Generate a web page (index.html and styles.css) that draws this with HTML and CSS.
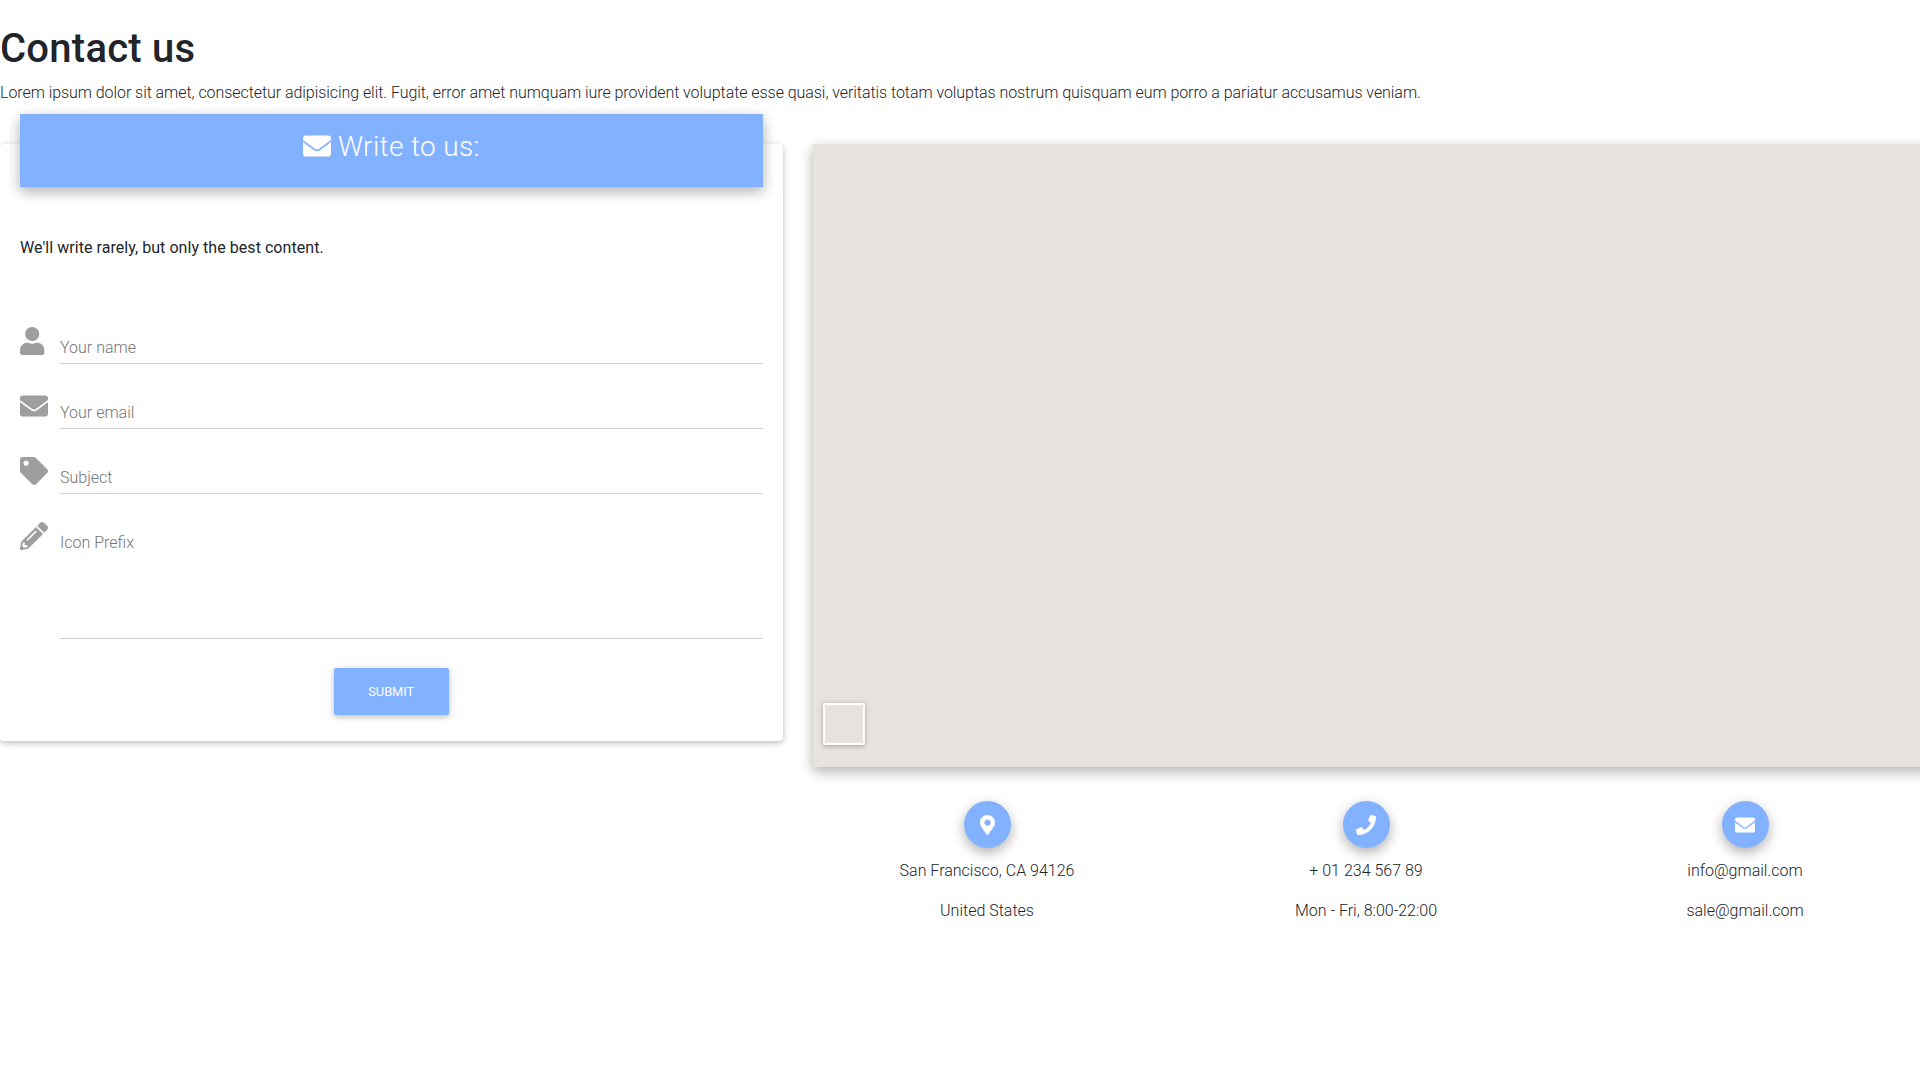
FILE: index.html
```html
<!DOCTYPE html>
<html lang="en">
<head>
    <meta charset="UTF-8">
    <meta name="viewport" content="width=device-width, initial-scale=1.0">
    <title>Contact us</title>
    <link rel="stylesheet" href="styles.css">
</head>
<body>
    <svg class="sprite" xmlns="http://www.w3.org/2000/svg">
        <symbol id="i-user" viewBox="0 0 448 512"><path d="M224 256c70.7 0 128-57.3 128-128S294.7 0 224 0 96 57.3 96 128s57.3 128 128 128zm89.6 32h-16.7c-22.2 10.2-46.9 16-72.9 16s-50.6-5.8-72.9-16h-16.7C60.2 288 0 348.2 0 422.4V464c0 26.5 21.5 48 48 48h352c26.5 0 48-21.5 48-48v-41.6c0-74.2-60.2-134.4-134.4-134.4z"/></symbol>
        <symbol id="i-envelope" viewBox="0 0 512 512"><path d="M502.3 190.8c3.9-3.1 9.7-.2 9.7 4.7V400c0 26.5-21.5 48-48 48H48c-26.5 0-48-21.5-48-48V195.6c0-5 5.7-7.8 9.7-4.7 22.4 17.4 52.1 39.5 154.1 113.6 21.1 15.4 56.7 47.8 92.2 47.6 35.7.3 72-32.8 92.3-47.6 102-74.1 131.6-96.3 154-113.7zM256 320c23.2.4 56.6-29.2 73.4-41.4 132.7-96.3 142.8-104.7 173.4-128.7 5.8-4.5 9.2-11.5 9.2-18.9v-19c0-26.5-21.5-48-48-48H48C21.5 64 0 85.5 0 112v19c0 7.4 3.4 14.3 9.2 18.9 30.6 23.9 40.7 32.4 173.4 128.7 16.8 12.2 50.2 41.8 73.4 41.4z"/></symbol>
        <symbol id="i-tag" viewBox="0 0 512 512"><path d="M0 252.118V48C0 21.49 21.49 0 48 0h204.118a48 48 0 0 1 33.941 14.059l211.882 211.882c18.745 18.745 18.745 49.137 0 67.882L293.823 497.941c-18.745 18.745-49.137 18.745-67.882 0L14.059 286.059A48 48 0 0 1 0 252.118zM112 64c-26.51 0-48 21.49-48 48s21.49 48 48 48 48-21.49 48-48-21.49-48-48-48z"/></symbol>
        <symbol id="i-pencil" viewBox="0 0 512 512"><path d="M497.9 142.1l-46.1 46.1c-4.7 4.7-12.3 4.7-17 0l-111-111c-4.7-4.7-4.7-12.3 0-17l46.1-46.1c18.7-18.7 49.1-18.7 67.9 0l60.1 60.1c18.8 18.7 18.8 49.1 0 67.9zM284.2 99.8L21.6 362.4.4 483.9c-2.9 16.4 11.4 30.6 27.8 27.8l121.5-21.3 262.6-262.6c4.7-4.7 4.7-12.3 0-17l-111-111c-4.8-4.7-12.4-4.7-17.1 0zM124.1 339.9c-5.5-5.5-5.5-14.3 0-19.8l154-154c5.5-5.5 14.3-5.5 19.8 0s5.5 14.3 0 19.8l-154 154c-5.5 5.5-14.3 5.5-19.8 0zM88 424h48v36.3l-64.5 11.3-31.1-31.1L51.7 376H88v48z"/></symbol>
        <symbol id="i-marker" viewBox="0 0 384 512"><path d="M172.268 501.67C26.97 291.031 0 269.413 0 192 0 85.961 85.961 0 192 0s192 85.961 192 192c0 77.413-26.97 99.031-172.268 309.67-9.535 13.774-29.93 13.773-39.464 0zM192 272c44.183 0 80-35.817 80-80s-35.817-80-80-80-80 35.817-80 80 35.817 80 80 80z"/></symbol>
        <symbol id="i-phone" viewBox="0 0 512 512"><path d="M493.4 24.6l-104-24c-11.3-2.6-22.9 3.3-27.5 13.9l-48 112c-4.2 9.8-1.4 21.3 6.9 28l60.6 49.6c-36 76.7-98.9 140.5-177.2 177.2l-49.6-60.6c-6.8-8.3-18.2-11.1-28-6.9l-112 48C3.9 366.5-2 378.1.6 389.4l24 104C27.1 504.2 36.7 512 48 512c256.1 0 464-207.5 464-464 0-11.2-7.7-20.9-18.6-23.4z"/></symbol>
    </svg>

    <h1>Contact us</h1>
    <p class="lead">Lorem ipsum dolor sit amet, consectetur adipisicing elit. Fugit, error amet numquam iure provident voluptate esse quasi, veritatis totam voluptas nostrum quisquam eum porro a pariatur accusamus veniam.</p>

    <div class="row">
        <!-- Left: form card -->
        <div class="col-form">
            <div class="card">
                <div class="card-header">
                    <h3><svg class="icon-inline"><use href="#i-envelope"/></svg> Write to us:</h3>
                </div>
                <p class="note">We'll write rarely, but only the best content.</p>

                <div class="field">
                    <svg class="prefix prefix-user"><use href="#i-user"/></svg>
                    <div class="input">Your name</div>
                </div>
                <div class="field">
                    <svg class="prefix"><use href="#i-envelope"/></svg>
                    <div class="input">Your email</div>
                </div>
                <div class="field">
                    <svg class="prefix"><use href="#i-tag"/></svg>
                    <div class="input">Subject</div>
                </div>
                <div class="field">
                    <svg class="prefix"><use href="#i-pencil"/></svg>
                    <div class="input input-area">Icon Prefix</div>
                </div>

                <div class="actions">
                    <button class="btn-submit">Submit</button>
                </div>
            </div>
        </div>

        <!-- Right: map and contact details -->
        <div class="col-map">
            <div class="map">
                <div class="map-control"></div>
            </div>
            <div class="contacts">
                <div class="contact">
                    <span class="circle"><svg class="circle-icon-marker"><use href="#i-marker"/></svg></span>
                    <p>San Francisco, CA 94126</p>
                    <p>United States</p>
                </div>
                <div class="contact">
                    <span class="circle"><svg class="circle-icon"><use href="#i-phone"/></svg></span>
                    <p>+ 01 234 567 89</p>
                    <p>Mon - Fri, 8:00-22:00</p>
                </div>
                <div class="contact">
                    <span class="circle"><svg class="circle-icon"><use href="#i-envelope"/></svg></span>
                    <p>info@gmail.com</p>
                    <p>sale@gmail.com</p>
                </div>
            </div>
        </div>
    </div>
</body>
</html>
```

FILE: styles.css
```css
:root {
    --blue: #82b1ff;
    --grey: #9e9e9e;
    --text: #212529;
    --shadow-1: 0 2px 5px rgba(0, 0, 0, 0.16), 0 2px 10px rgba(0, 0, 0, 0.12);
    --shadow-2: 0 5px 11px rgba(0, 0, 0, 0.18), 0 4px 15px rgba(0, 0, 0, 0.15);
}

* {
    margin: 0;
    padding: 0;
    box-sizing: border-box;
}

html, body {
    overflow-x: hidden;
}

body {
    font-family: Roboto, "Liberation Sans", sans-serif;
    font-size: 16px;
    font-weight: 300;
    line-height: 24px;
    color: var(--text);
    background: #fff;
    padding-top: 25px;
}

.sprite {
    display: none;
}

svg {
    fill: currentColor;
}

h1 {
    font-size: 40px;
    font-weight: 500;
    line-height: 48px;
    letter-spacing: 0.25px;
    margin-bottom: 8px;
}

.lead {
    letter-spacing: -0.06px;
    margin-bottom: 39px;
}

.row {
    display: flex;
    align-items: flex-start;
    width: 1935px;
}

.col-form {
    flex: 0 0 782.5px;
    margin-right: 30px;
}

.col-map {
    flex: 1;
}

/* Form card */
.card {
    display: flow-root;
    background: #fff;
    border-radius: 4px;
    box-shadow: var(--shadow-1);
    padding: 0 20px 26px;
}

.card-header {
    background: var(--blue);
    color: #fff;
    text-align: center;
    padding: 16px 16px 15px;
    margin-top: -30px;
    box-shadow: var(--shadow-2);
}

.card-header h3 {
    font-size: 28px;
    font-weight: 300;
    line-height: 33.6px;
    letter-spacing: 0.35px;
    margin-bottom: 8px;
}

.icon-inline {
    width: 28px;
    height: 28px;
    vertical-align: -4px;
}

.note {
    font-weight: 400;
    letter-spacing: 0.05px;
    margin-top: 49px;
    margin-bottom: 67px;
}

.field {
    display: flex;
    margin-bottom: 28px;
    color: var(--grey);
}

.prefix {
    flex: 0 0 28px;
    width: 28px;
    height: 28px;
    margin-right: 12px;
}

.prefix-user {
    flex-basis: 24.5px;
    width: 24.5px;
    margin-right: 15.5px;
}

.input {
    flex: 1;
    height: 37px;
    padding-top: 9px;
    border-bottom: 1px solid #ced4da;
    color: #757575;
}

.input-area {
    height: 117px;
}

.actions {
    text-align: center;
    padding-top: 1.5px;
}

.btn-submit {
    background: var(--blue);
    color: #fff;
    border: none;
    border-radius: 2px;
    font-family: inherit;
    font-size: 12.8px;
    font-weight: 400;
    line-height: 19px;
    text-transform: uppercase;
    padding: 13.75px 34.5px;
    box-shadow: var(--shadow-1);
}

/* Map */
.map {
    position: relative;
    height: 623px;
    background: #e6e2de;
    box-shadow: var(--shadow-2);
}

.map-control {
    position: absolute;
    left: 10px;
    bottom: 22px;
    width: 42px;
    height: 42px;
    background: #e6e2de;
    border: 2px solid #fff;
    border-radius: 2px;
    box-shadow: 0 1px 4px rgba(0, 0, 0, 0.3);
}

/* Contact details */
.contacts {
    display: flex;
    margin-left: -15px;
    margin-top: 34px;
}

.contact {
    flex: 0 0 379px;
    text-align: center;
}

.contact p {
    margin-bottom: 16px;
}

.circle {
    display: flex;
    align-items: center;
    justify-content: center;
    width: 47px;
    height: 47px;
    margin: 0 auto 11px;
    border-radius: 50%;
    background: var(--blue);
    color: #fff;
    box-shadow: var(--shadow-2);
}

.circle-icon {
    width: 20px;
    height: 20px;
}

.circle-icon-marker {
    width: 15px;
    height: 20px;
}
```
